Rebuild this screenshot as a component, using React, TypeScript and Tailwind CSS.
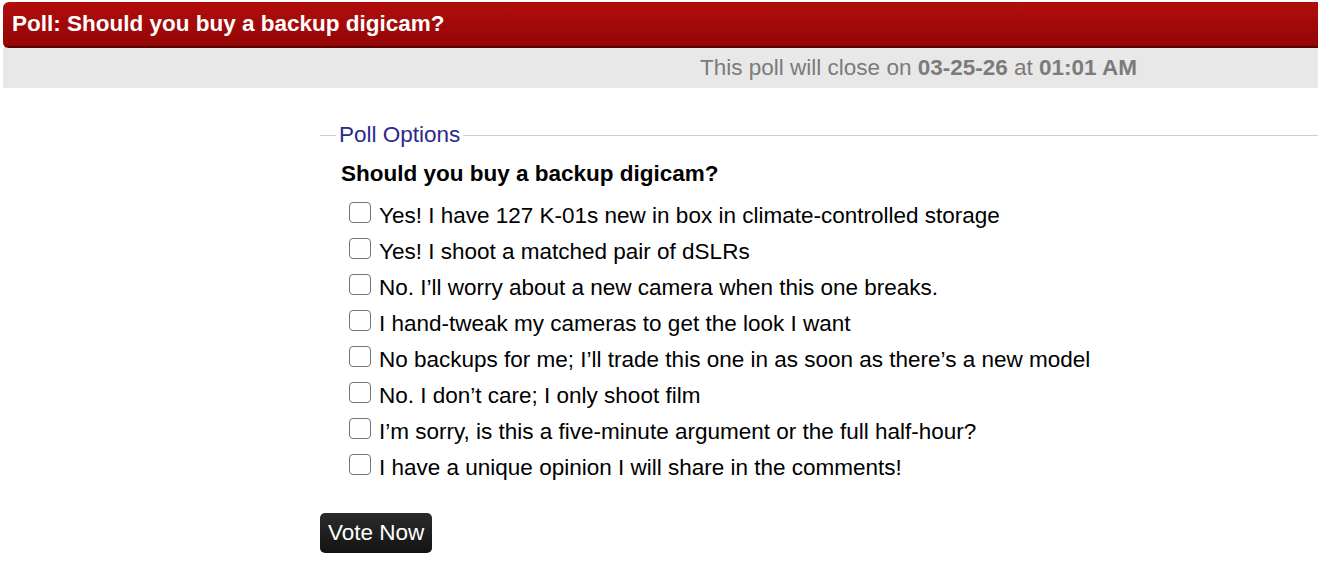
const options = [
  'Yes! I have 127 K-01s new in box in climate-controlled storage',
  'Yes! I shoot a matched pair of dSLRs',
  'No. I\u2019ll worry about a new camera when this one breaks.',
  'I hand-tweak my cameras to get the look I want',
  'No backups for me; I\u2019ll trade this one in as soon as there\u2019s a new model',
  'No. I don\u2019t care; I only shoot film',
  'I\u2019m sorry, is this a five-minute argument or the full half-hour?',
  'I have a unique opinion I will share in the comments!',
];

export default function App() {
  return (
    <div className="min-h-[578px] bg-white pl-[3px] pt-[2px] font-['Liberation_Sans',Arial,sans-serif] text-[22.5px] leading-[30px]">
      {/* Header */}
      <div className="flex h-[46px] items-center rounded-l-[6px] border-b-2 border-[#5a0000] bg-gradient-to-b from-[#b20d0d] to-[#930606] pl-[9px] shadow-[0_1px_0_#d98a8a]">
        <h2 className="font-bold text-white">Poll: Should you buy a backup digicam?</h2>
      </div>

      {/* Close date */}
      <div className="flex h-[40px] items-center justify-end bg-[#e8e8e8] pr-[181px] text-[#7b7b7b]">
        <span>
          This poll will close on <b>03-25-26</b> at <b>01:01 AM</b>
        </span>
      </div>

      {/* Poll form */}
      <div className="pl-[317px] pt-[32px]">
        <div className="flex items-center">
          <div className="h-px w-[16px] bg-[#cfcfcf]" />
          <span className="px-[3px] text-[#2b2b8c]">Poll Options</span>
          <div className="h-px flex-1 bg-[#cfcfcf]" />
        </div>

        <div className="pl-[21px] pt-[9px]">
          <p className="font-bold text-black">Should you buy a backup digicam?</p>
          <div className="mt-[9px] flex flex-col pl-[8px]">
            {options.map((o) => (
              <label key={o} className="flex h-[36px] items-center gap-[8px] text-black">
                <span className="mb-[8px] h-[21px] w-[22px] shrink-0 rounded-[4px] border border-[#767676] bg-white" />
                <span>{o}</span>
              </label>
            ))}
          </div>
        </div>

        <button className="mt-[27px] h-[40px] rounded-[5px] bg-gradient-to-b from-[#2b2b2b] to-[#141414] px-[8px] text-white">
          Vote Now
        </button>
      </div>
    </div>
  );
}
